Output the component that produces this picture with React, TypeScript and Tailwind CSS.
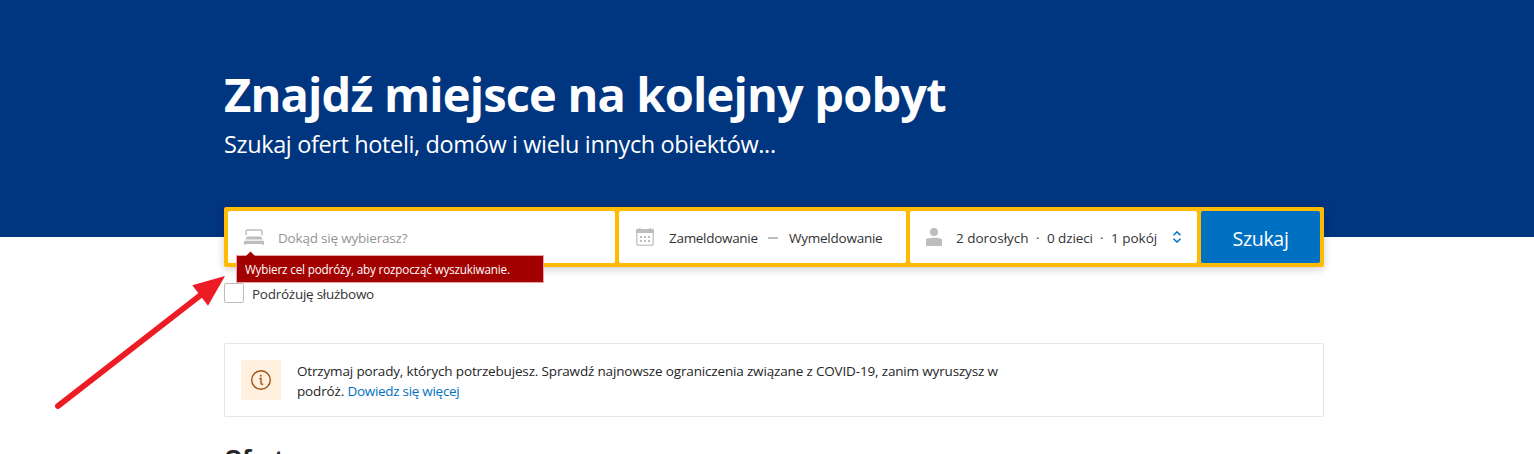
function BedIcon() {
  return (
    <svg className="h-4 w-5 shrink-0" viewBox="0 0 20 16" fill="#bdbdbd">
      <path d="M2 6.200V2.500A1.500 1.500 0 0 1 3.500 1H16.500A1.500 1.500 0 0 1 18 2.500V6.200" fill="none" stroke="#bdbdbd" strokeWidth="1.400" />
      <path d="M3.200 7.500H16.800L18.600 10.500H1.400Z" />
      <path d="M.6 11.700H19.400L20 12.500V16H18.500V15H1.500V16H0V12.500Z" />
    </svg>
  );
}

function CalendarIcon() {
  return (
    <svg className="h-[18px] w-[18px] shrink-0" viewBox="0 0 18 18">
      <rect x=".8" y="1.800" width="16.400" height="15.400" rx="1.200" fill="none" stroke="#c9c9c9" strokeWidth="1.500" />
      <path d="M0 5V2.200A1.200 1.200 0 0 1 1.200 1H3V0H4.500V1H13.500V0H15V1H16.800A1.200 1.200 0 0 1 18 2.200V5Z" fill="#bdbdbd" />
      <g fill="#bdbdbd">
        <rect x="4" y="8" width="2" height="2" />
        <rect x="8" y="8" width="2" height="2" />
        <rect x="12" y="8" width="2" height="2" />
        <rect x="4" y="12" width="2" height="2" />
        <rect x="8" y="12" width="2" height="2" />
        <rect x="12" y="12" width="2" height="2" />
      </g>
    </svg>
  );
}

function PersonIcon() {
  return (
    <svg className="h-[18px] w-4 shrink-0" viewBox="0 0 16 18" fill="#bdbdbd">
      <circle cx="8" cy="4.100" r="4" />
      <path d="M0 18V12Q0 10.800 1.200 10.500Q8 9.200 14.800 10.500Q16 10.800 16 12V18Z" />
    </svg>
  );
}

function SearchBar() {
  return (
    <div className="relative flex h-[60px] gap-1 rounded-[2px] bg-[#febb02] p-1 text-[13.5px] text-[#333] shadow-[0_2px_8px_rgba(0,0,0,0.2)]">
      <div className="flex w-[387px] items-center rounded-[2px] bg-white pl-4">
        <BedIcon />
        <span className="ml-[14px] pt-0.5 tracking-[-0.2px] text-[#949494]">Dokąd się wybierasz?</span>
      </div>
      <div className="flex w-[287px] items-center rounded-[2px] bg-white pl-[17px]">
        <CalendarIcon />
        <span className="ml-[15px] w-[99px] pt-0.5 tracking-[-0.3px]">Zameldowanie</span>
        <span className="mt-0.5 h-0.5 w-[10px] bg-[#bdbdbd]" />
        <span className="ml-[11px] pt-0.5 tracking-[-0.24px]">Wymeldowanie</span>
      </div>
      <div className="flex w-[287px] items-center rounded-[2px] bg-white pl-4">
        <PersonIcon />
        <span className="ml-[14px] w-[80px] pt-0.5">2 dorosłych</span>
        <span className="w-[11px] pt-0.5">·</span>
        <span className="w-[53px] pt-0.5 tracking-[-0.1px]">0 dzieci</span>
        <span className="w-[11px] pt-0.5">·</span>
        <span className="w-[62px] pt-0.5">1 pokój</span>
        <svg className="h-3 w-2 shrink-0" viewBox="0 0 8 12" fill="none" stroke="#0071c2" strokeWidth="1.500">
          <path d="M.5 4.200L4 .9L7.500 4.200M.5 7.800L4 11.100L7.500 7.800" />
        </svg>
      </div>
      <button className="flex-1 rounded-[2px] bg-[#0071c2] pt-[3px] text-[19.600px] tracking-[-0.35px] text-white">Szukaj</button>
      <div className="absolute left-[12px] top-[48px] flex h-7 w-[308px] items-center border border-[#f0a3a3] bg-[#a30000] pl-2 pt-px text-[11.700px] tracking-[-0.17px] text-white">
        <svg className="absolute -top-[5px] left-2 h-[6px] w-[11px]" viewBox="0 0 11 6">
          <path d="M0 6L5.500 .5L11 6Z" fill="#a30000" />
        </svg>
        Wybierz cel podróży, aby rozpocząć wyszukiwanie.
      </div>
    </div>
  );
}

export default function App() {
  return (
    <div className="relative h-[454px] overflow-hidden bg-[linear-gradient(#003580_237px,#fff_237px)] font-['Open_Sans','Noto_Sans',sans-serif]">
      <main className="ml-[224px] flex w-[1100px] flex-col pt-[61px]">
        <h1 className="mb-px h-[66px] whitespace-nowrap text-[47px] font-bold leading-[66px] tracking-[-0.83px] text-white">Znajdź miejsce na kolejny pobyt</h1>
        <p className="mb-[47px] h-8 whitespace-nowrap text-[23.500px] leading-8 tracking-[-0.37px] text-white">Szukaj ofert hoteli, domów i wielu innych obiektów...</p>
        <SearchBar />
        <label className="mt-4 flex h-5 items-center gap-2 text-[13.500px] tracking-[-0.26px] text-[#333]">
          <span className="h-5 w-5 rounded-[2px] border border-[#bdbdbd] bg-white" />
          <span className="pt-0.5">Podróżuję służbowo</span>
        </label>
        <section className="mt-10 flex h-[74px] gap-4 rounded-[2px] border border-[#e6e6e6] p-4">
          <div className="flex h-10 w-10 items-center justify-center rounded-[2px] bg-[#fff0e0]">
            <svg className="h-5 w-5" viewBox="0 0 20 20" fill="none" stroke="#a3530f" strokeWidth="1.400">
              <circle cx="10" cy="10" r="9.300" />
              <path d="M8.300 8.500H10V13.200Q10 14.300 11.200 14.300H12.200" />
              <circle cx="9.800" cy="5.800" r="1" fill="#a3530f" stroke="none" />
            </svg>
          </div>
          <p className="whitespace-nowrap pt-px text-[13.500px] leading-5 tracking-[-0.16px] text-[#262626]">
            Otrzymaj porady, których potrzebujesz. Sprawdź najnowsze ograniczenia związane z COVID-19, zanim wyruszysz w
            <br />
            podróż. <a className="tracking-[-0.29px] text-[#0071c2]">Dowiedz się więcej</a>
          </p>
        </section>
        <h2 className="mt-[25px] text-[23.500px] font-bold leading-8 tracking-[-0.5px] text-[#262626]">Oferty</h2>
      </main>
      <svg className="absolute left-[50px] top-[270px] h-[145px] w-[180px]" viewBox="50 270 180 145">
        <path d="M58 406L202 294" stroke="#ed1c24" strokeWidth="6" strokeLinecap="round" />
        <path d="M225 276L192.300 285.300L208 305.700Z" fill="#ed1c24" />
      </svg>
    </div>
  );
}
